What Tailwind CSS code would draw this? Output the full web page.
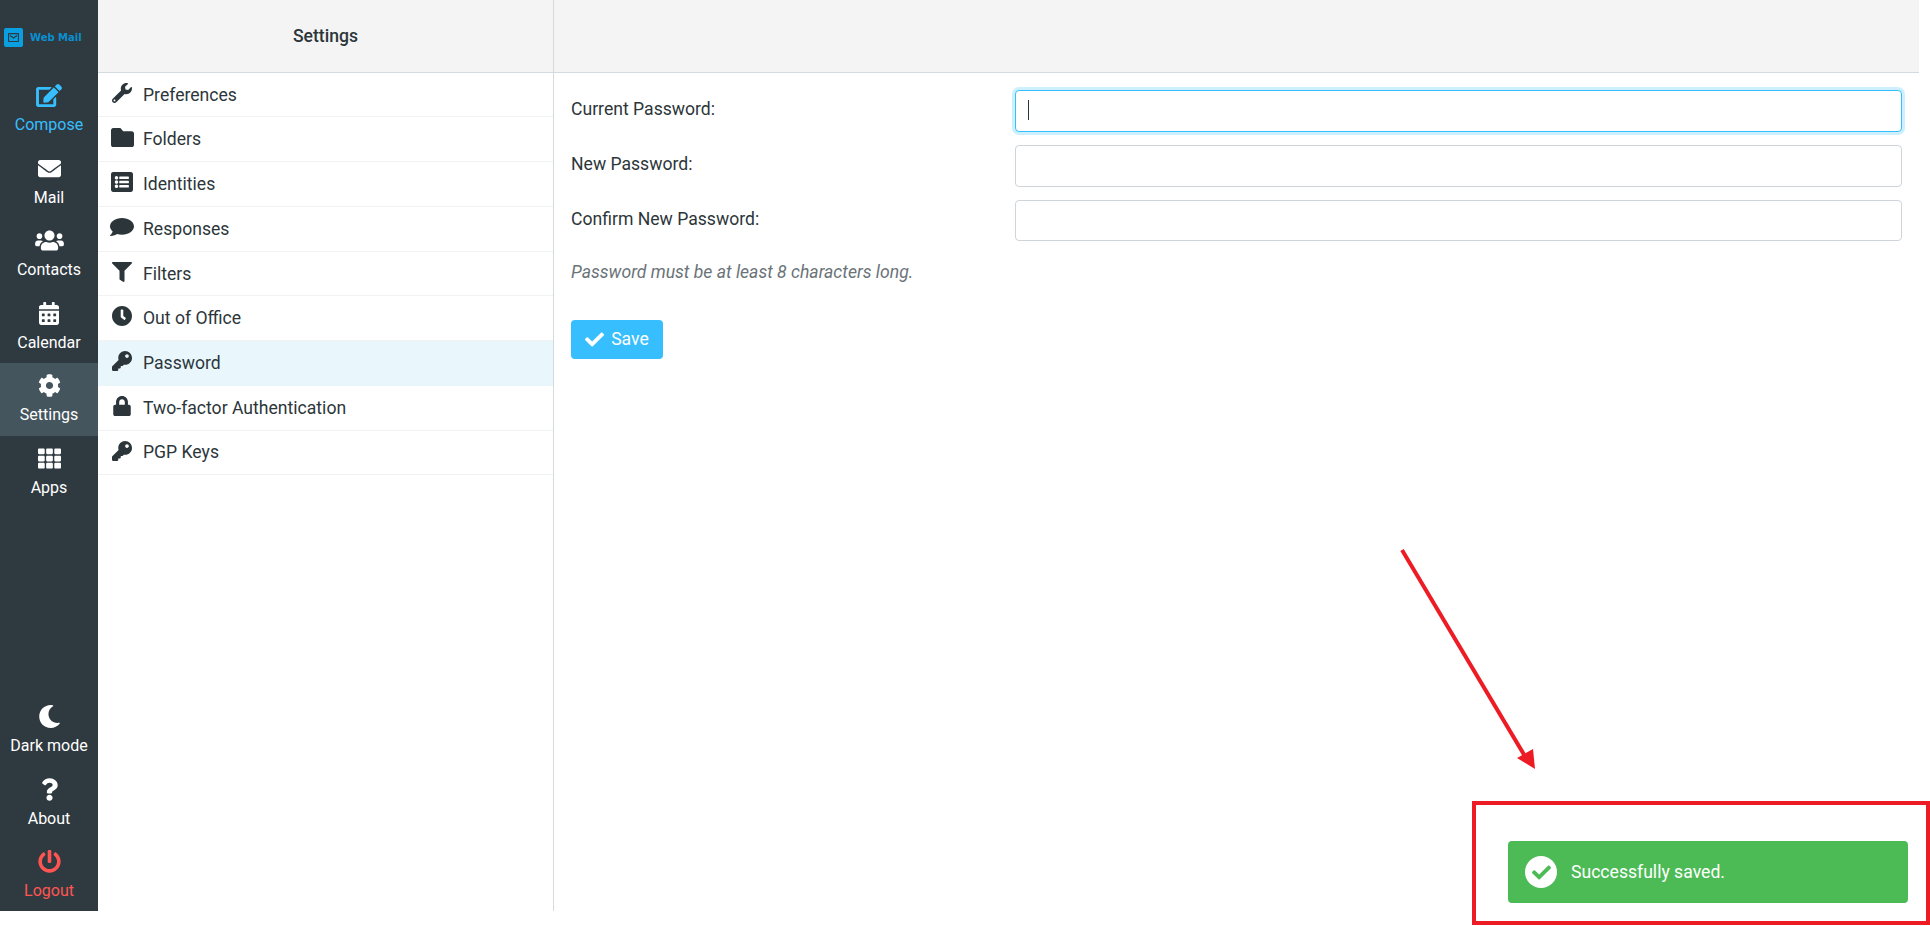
<!DOCTYPE html>
<html lang="en">
<head>
    <meta charset="UTF-8">
    <title>Web Mail - Settings</title>
    <script src="https://cdn.jsdelivr.net/npm/@tailwindcss/browser@4"></script>
</head>
<body class="bg-white h-[926px] overflow-hidden relative font-['Roboto',sans-serif] text-[#2c363a]">
    <!-- icon set -->
    <svg class="hidden">
        <symbol id="i-edit" viewBox="0 0 576 512"><path d="M402.6 83.2l90.2 90.2c3.8 3.8 3.8 10 0 13.8L274.4 405.6l-92.8 10.3c-12.4 1.4-22.9-9.1-21.5-21.5l10.3-92.8L388.8 83.2c3.8-3.8 10-3.8 13.8 0zm162-22.9l-48.8-48.8c-15.2-15.2-39.9-15.2-55.2 0l-35.4 35.4c-3.8 3.8-3.8 10 0 13.8l90.2 90.2c3.8 3.8 10 3.8 13.8 0l35.4-35.4c15.2-15.3 15.2-40 0-55.2zM384 346.2V448H64V128h229.8c3.2 0 6.2-1.3 8.5-3.5l40-40c7.6-7.6 2.2-20.5-8.5-20.5H48C21.5 64 0 85.5 0 112v352c0 26.5 21.5 48 48 48h352c26.5 0 48-21.5 48-48V306.2c0-10.7-12.9-16-20.5-8.5l-40 40c-2.2 2.3-3.5 5.3-3.5 8.5z"/></symbol>
        <symbol id="i-mail" viewBox="0 0 512 512"><path d="M502.3 190.8c3.9-3.1 9.7-.2 9.7 4.7V400c0 26.5-21.5 48-48 48H48c-26.5 0-48-21.5-48-48V195.6c0-5 5.7-7.8 9.7-4.7 22.4 17.4 52.1 39.5 154.1 113.6 21.1 15.4 56.7 47.8 92.2 47.6 35.7.3 72-32.8 92.3-47.6 102-74.1 131.6-96.3 154-113.7zM256 320c23.2.4 56.6-29.2 73.4-41.4 132.7-96.3 142.8-104.7 173.4-128.7 5.8-4.5 9.2-11.5 9.2-18.9v-19c0-26.5-21.5-48-48-48H48C21.5 64 0 85.5 0 112v19c0 7.4 3.4 14.3 9.2 18.9 30.6 23.9 40.7 32.4 173.4 128.7 16.8 12.2 50.2 41.8 73.4 41.4z"/></symbol>
        <symbol id="i-users" viewBox="0 0 640 512"><path d="M96 224c35.3 0 64-28.7 64-64s-28.7-64-64-64-64 28.7-64 64 28.7 64 64 64zm448 0c35.3 0 64-28.7 64-64s-28.7-64-64-64-64 28.7-64 64 28.7 64 64 64zm32 32h-64c-17.6 0-33.5 7.1-45.1 18.6 40.3 22.1 68.9 62 75.1 109.4h66c17.7 0 32-14.3 32-32v-32c0-35.3-28.7-64-64-64zm-256 0c61.9 0 112-50.1 112-112S381.9 32 320 32 208 82.1 208 144s50.1 112 112 112zm76.8 32h-8.3c-20.8 10-43.9 16-68.5 16s-47.6-6-68.5-16h-8.3C179.6 288 128 339.6 128 403.2V432c0 26.5 21.5 48 48 48h288c26.5 0 48-21.5 48-48v-28.8c0-63.6-51.6-115.2-115.2-115.2zm-223.7-13.4C161.5 263.1 145.6 256 128 256H64c-35.3 0-64 28.7-64 64v32c0 17.7 14.3 32 32 32h65.9c6.3-47.4 34.9-87.3 75.2-109.4z"/></symbol>
        <symbol id="i-calendar" viewBox="0 0 448 512"><path d="M0 464c0 26.5 21.5 48 48 48h352c26.5 0 48-21.5 48-48V192H0v272zm320-196c0-6.6 5.4-12 12-12h40c6.6 0 12 5.4 12 12v40c0 6.6-5.4 12-12 12h-40c-6.6 0-12-5.4-12-12v-40zm0 128c0-6.6 5.4-12 12-12h40c6.6 0 12 5.4 12 12v40c0 6.6-5.4 12-12 12h-40c-6.6 0-12-5.4-12-12v-40zM192 268c0-6.6 5.4-12 12-12h40c6.6 0 12 5.4 12 12v40c0 6.6-5.4 12-12 12h-40c-6.6 0-12-5.4-12-12v-40zm0 128c0-6.6 5.4-12 12-12h40c6.6 0 12 5.4 12 12v40c0 6.6-5.4 12-12 12h-40c-6.6 0-12-5.4-12-12v-40zM64 268c0-6.6 5.4-12 12-12h40c6.6 0 12 5.4 12 12v40c0 6.6-5.4 12-12 12H76c-6.6 0-12-5.4-12-12v-40zm0 128c0-6.6 5.4-12 12-12h40c6.6 0 12 5.4 12 12v40c0 6.6-5.4 12-12 12H76c-6.6 0-12-5.4-12-12v-40zM400 64h-48V16c0-8.8-7.2-16-16-16h-32c-8.8 0-16 7.2-16 16v48H160V16c0-8.8-7.2-16-16-16h-32c-8.8 0-16 7.2-16 16v48H48C21.5 64 0 85.5 0 112v48h448v-48c0-26.5-21.5-48-48-48z"/></symbol>
        <symbol id="i-cog" viewBox="0 0 512 512"><path d="M487.4 315.7l-42.6-24.6c4.3-23.2 4.3-47 0-70.2l42.6-24.6c4.9-2.8 7.1-8.6 5.5-14-11.1-35.6-30-67.8-54.7-94.6-3.8-4.1-10-5.1-14.8-2.3L380.8 110c-17.9-15.4-38.5-27.3-60.8-35.1V25.8c0-5.6-3.9-10.5-9.4-11.7-36.7-8.2-74.3-7.8-109.2 0-5.5 1.2-9.4 6.1-9.4 11.7V75c-22.2 7.9-42.8 19.8-60.8 35.1L88.7 85.5c-4.9-2.8-11-1.9-14.8 2.3-24.7 26.7-43.6 58.9-54.7 94.6-1.7 5.4.6 11.2 5.5 14L67.3 221c-4.3 23.2-4.3 47 0 70.2l-42.6 24.6c-4.9 2.8-7.1 8.6-5.5 14 11.1 35.6 30 67.8 54.7 94.6 3.8 4.1 10 5.1 14.8 2.3l42.6-24.6c17.9 15.4 38.5 27.3 60.8 35.1v49.2c0 5.6 3.9 10.5 9.4 11.7 36.7 8.2 74.3 7.8 109.2 0 5.5-1.2 9.4-6.1 9.4-11.7v-49.2c22.2-7.9 42.8-19.8 60.8-35.1l42.6 24.6c4.9 2.8 11 1.9 14.8-2.3 24.7-26.7 43.6-58.9 54.7-94.6 1.5-5.5-.7-11.3-5.6-14.1zM256 336c-44.1 0-80-35.9-80-80s35.9-80 80-80 80 35.9 80 80-35.9 80-80 80z"/></symbol>
        <symbol id="i-apps" viewBox="0 0 512 512"><path d="M149.333 56v80c0 13.255-10.745 24-24 24H24c-13.255 0-24-10.745-24-24V56c0-13.255 10.745-24 24-24h101.333c13.255 0 24 10.745 24 24zm181.334 240v-80c0-13.255-10.745-24-24-24H205.333c-13.255 0-24 10.745-24 24v80c0 13.255 10.745 24 24 24h101.333c13.256 0 24.001-10.745 24.001-24zm32-240v80c0 13.255 10.745 24 24 24H488c13.255 0 24-10.745 24-24V56c0-13.255-10.745-24-24-24H386.667c-13.255 0-24 10.745-24 24zm-32 80V56c0-13.255-10.745-24-24-24H205.333c-13.255 0-24 10.745-24 24v80c0 13.255 10.745 24 24 24h101.333c13.256 0 24.001-10.745 24.001-24zm-205.334 56H24c-13.255 0-24 10.745-24 24v80c0 13.255 10.745 24 24 24h101.333c13.255 0 24-10.745 24-24v-80c0-13.255-10.745-24-24-24zM0 376v80c0 13.255 10.745 24 24 24h101.333c13.255 0 24-10.745 24-24v-80c0-13.255-10.745-24-24-24H24c-13.255 0-24 10.745-24 24zm386.667-56H488c13.255 0 24-10.745 24-24v-80c0-13.255-10.745-24-24-24H386.667c-13.255 0-24 10.745-24 24v80c0 13.255 10.745 24 24 24zm0 160H488c13.255 0 24-10.745 24-24v-80c0-13.255-10.745-24-24-24H386.667c-13.255 0-24 10.745-24 24v80c0 13.255 10.745 24 24 24zM181.333 376v80c0 13.255 10.745 24 24 24h101.333c13.255 0 24-10.745 24-24v-80c0-13.255-10.745-24-24-24H205.333c-13.255 0-24 10.745-24 24z"/></symbol>
        <symbol id="i-moon" viewBox="0 0 512 512"><path d="M283.211 512c78.962 0 151.079-35.925 198.857-94.792 7.068-8.708-.639-21.43-11.562-19.35-124.203 23.654-238.262-71.576-238.262-196.954 0-72.222 38.662-138.635 101.498-174.394 9.686-5.512 7.25-20.197-3.756-22.23A258.156 258.156 0 0 0 283.211 0c-141.309 0-256 114.511-256 256 0 141.309 114.511 256 256 256z"/></symbol>
        <symbol id="i-question" viewBox="0 0 384 512"><path d="M202.021 0C122.202 0 70.503 32.703 29.914 91.026c-7.363 10.58-5.093 25.086 5.178 32.874l43.138 32.709c10.373 7.865 25.132 6.026 33.253-4.148 25.049-31.381 43.63-49.449 82.757-49.449 30.764 0 68.816 19.799 68.816 49.631 0 22.552-18.617 34.134-48.993 51.164-35.423 19.86-82.299 44.576-82.299 106.405V320c0 13.255 10.745 24 24 24h72.471c13.255 0 24-10.745 24-24v-5.773c0-42.86 125.268-44.645 125.268-160.627C377.504 66.256 286.902 0 202.021 0zM192 373.459c-38.196 0-69.271 31.075-69.271 69.271 0 38.195 31.075 69.27 69.271 69.27s69.271-31.075 69.271-69.271-31.075-69.27-69.271-69.27z"/></symbol>
        <symbol id="i-power" viewBox="0 0 512 512"><path d="M400 54.1c63 45 104 118.6 104 201.9 0 136.8-110.8 247.7-247.5 248C120 504.3 8.2 393 8 256.4 7.9 173.1 48.9 99.3 111.8 54.2c11.7-8.3 28-4.8 35 7.7L162.6 90c5.9 10.5 3.1 23.8-6.6 31-41.5 30.8-68 79.6-68 134.9-.1 92.3 74.5 168.1 168 168.1 91.6 0 168.6-74.2 168-169.1-.3-51.8-24.7-101.8-68.1-134-9.7-7.2-12.4-20.5-6.5-30.9l15.8-28.1c7-12.4 23.2-16.1 34.8-7.8zM296 264V24c0-13.3-10.7-24-24-24h-32c-13.3 0-24 10.7-24 24v240c0 13.3 10.7 24 24 24h32c13.3 0 24-10.7 24-24z"/></symbol>
        <symbol id="i-wrench" viewBox="0 0 512 512"><path d="M507.73 109.1c-2.24-9.03-13.54-12.09-20.12-5.51l-74.36 74.36-67.88-11.31-11.31-67.88 74.36-74.36c6.62-6.62 3.43-17.9-5.66-20.16-47.38-11.74-99.55.91-136.58 37.93-39.64 39.64-50.55 97.1-34.05 147.2L18.74 402.76c-24.99 24.99-24.99 65.51 0 90.5 24.99 24.99 65.51 24.99 90.5 0l213.21-213.21c50.12 16.71 107.47 5.68 147.37-34.22 37.07-37.07 49.7-89.32 37.91-136.73zM64 472c-13.25 0-24-10.75-24-24 0-13.26 10.75-24 24-24s24 10.74 24 24c0 13.25-10.75 24-24 24z"/></symbol>
        <symbol id="i-folder" viewBox="0 64 512 384" preserveAspectRatio="none"><path d="M464 128H272l-64-64H48C21.49 64 0 85.49 0 112v288c0 26.51 21.49 48 48 48h416c26.51 0 48-21.49 48-48V176c0-26.51-21.49-48-48-48z"/></symbol>
        <symbol id="i-list" viewBox="0 32 512 448" preserveAspectRatio="none"><path d="M464 480H48c-26.51 0-48-21.49-48-48V80c0-26.51 21.49-48 48-48h416c26.51 0 48 21.49 48 48v352c0 26.51-21.49 48-48 48zM128 120c-22.091 0-40 17.909-40 40s17.909 40 40 40 40-17.909 40-40-17.909-40-40-40zm0 96c-22.091 0-40 17.909-40 40s17.909 40 40 40 40-17.909 40-40-17.909-40-40-40zm0 96c-22.091 0-40 17.909-40 40s17.909 40 40 40 40-17.909 40-40-17.909-40-40-40zm288-136v-32c0-6.627-5.373-12-12-12H204c-6.627 0-12 5.373-12 12v32c0 6.627 5.373 12 12 12h200c6.627 0 12-5.373 12-12zm0 96v-32c0-6.627-5.373-12-12-12H204c-6.627 0-12 5.373-12 12v32c0 6.627 5.373 12 12 12h200c6.627 0 12-5.373 12-12zm0 96v-32c0-6.627-5.373-12-12-12H204c-6.627 0-12 5.373-12 12v32c0 6.627 5.373 12 12 12h200c6.627 0 12-5.373 12-12z"/></symbol>
        <symbol id="i-comment" viewBox="0 32 512 448" preserveAspectRatio="none"><path d="M256 32C114.6 32 0 125.1 0 240c0 49.6 21.4 95 57 130.7C44.5 421.1 2.7 466 2.2 466.5c-2.2 2.3-2.8 5.7-1.5 8.7S4.8 480 8 480c66.3 0 116-31.8 140.6-51.4 32.7 12.3 69 19.4 107.4 19.4 141.4 0 256-93.1 256-208S397.4 32 256 32z"/></symbol>
        <symbol id="i-filter" viewBox="0 0 512 512"><path d="M487.976 0H24.028C2.71 0-8.047 25.866 7.058 40.971L192 225.941V432c0 7.831 3.821 15.17 10.237 19.662l80 55.98C298.02 518.69 320 507.493 320 487.98V225.941l184.947-184.97C520.021 25.896 509.338 0 487.976 0z"/></symbol>
        <symbol id="i-clock" viewBox="8 8 496 496"><path d="M256,8C119,8,8,119,8,256S119,504,256,504,504,393,504,256,393,8,256,8Zm92.49,313h0l-20,25a16,16,0,0,1-22.49,2.5h0l-67-49.72a40,40,0,0,1-15-31.23V112a16,16,0,0,1,16-16h32a16,16,0,0,1,16,16V256l58,42.5A16,16,0,0,1,348.49,321Z"/></symbol>
        <symbol id="i-key" viewBox="0 0 512 512"><path d="M512 176.001C512 273.203 433.202 352 336 352c-11.22 0-22.19-1.062-32.827-3.069l-24.012 27.014A23.999 23.999 0 0 1 261.223 384H224v40c0 13.255-10.745 24-24 24h-40v40c0 13.255-10.745 24-24 24H24c-13.255 0-24-10.745-24-24v-78.059c0-6.365 2.529-12.47 7.029-16.971l161.802-161.802C163.108 213.814 160 195.271 160 176 160 78.798 238.797.001 335.999 0 433.488-.001 512 78.511 512 176.001zM336 128c0 26.51 21.49 48 48 48s48-21.49 48-48-21.49-48-48-48-48 21.49-48 48z"/></symbol>
        <symbol id="i-lock" viewBox="0 0 448 512"><path d="M400 224h-24v-72C376 68.2 307.8 0 224 0S72 68.2 72 152v72H48c-26.5 0-48 21.5-48 48v192c0 26.5 21.5 48 48 48h352c26.5 0 48-21.5 48-48V272c0-26.5-21.5-48-48-48zm-104 0H152v-72c0-39.7 32.3-72 72-72s72 32.3 72 72v72z"/></symbol>
        <symbol id="i-check" viewBox="0 0 512 512"><path d="M173.898 439.404l-166.4-166.4c-9.997-9.997-9.997-26.206 0-36.204l36.203-36.204c9.997-9.998 26.207-9.998 36.204 0L192 312.69 432.095 72.596c9.997-9.997 26.207-9.997 36.204 0l36.203 36.204c9.997 9.997 9.997 26.206 0 36.204l-294.4 294.401c-9.998 9.997-26.207 9.997-36.204-.001z"/></symbol>
    </svg>

    <div class="flex w-[1919px] h-[911px]">
        <!-- Main menu -->
        <nav class="w-[98px] shrink-0 bg-[#2f3a40] flex flex-col text-white text-[16px] leading-5">
            <div class="h-[73px] flex items-center pl-1 pt-[2px]">
                <div class="w-[19px] h-[19px] rounded-[2px] bg-[#0a9fe0] flex items-center justify-center">
                    <svg class="w-[11px] h-[9px]" viewBox="0 0 22 18" fill="none" stroke="#2f3a40" stroke-width="2.5"><rect x="1" y="1" width="20" height="16" rx="2"/><path d="M4 5l7 5 7-5"/></svg>
                </div>
                <span class="ml-[7px] text-[#0a8fd0] font-['DejaVu_Sans',sans-serif] font-bold text-[10px]">Web Mail</span>
            </div>
            <a class="h-[72.5px] flex flex-col items-center pt-[11px] text-[#37beff]">
                <svg class="w-[26px] h-[23px] fill-current"><use href="#i-edit"/></svg>
                <span class="mt-[8px]">Compose</span>
            </a>
            <a class="h-[72.5px] flex flex-col items-center pt-[11px]">
                <svg class="w-[23px] h-[23px] fill-current"><use href="#i-mail"/></svg>
                <span class="mt-[8px]">Mail</span>
            </a>
            <a class="h-[72.5px] flex flex-col items-center pt-[11px]">
                <svg class="w-[29px] h-[23px] fill-current"><use href="#i-users"/></svg>
                <span class="mt-[8px]">Contacts</span>
            </a>
            <a class="h-[72.5px] flex flex-col items-center pt-[11px]">
                <svg class="w-[20px] h-[23px] fill-current"><use href="#i-calendar"/></svg>
                <span class="mt-[8px]">Calendar</span>
            </a>
            <a class="h-[72.5px] flex flex-col items-center pt-[11px] bg-[#45555d]">
                <svg class="w-[23px] h-[23px] fill-current"><use href="#i-cog"/></svg>
                <span class="mt-[8px]">Settings</span>
            </a>
            <a class="h-[72.5px] flex flex-col items-center pt-[11px]">
                <svg class="w-[23px] h-[23px] fill-current"><use href="#i-apps"/></svg>
                <span class="mt-[8px]">Apps</span>
            </a>
            <a class="mt-auto h-[73px] flex flex-col items-center pt-[13px]">
                <svg class="w-[23px] h-[23px] fill-current"><use href="#i-moon"/></svg>
                <span class="mt-[8px]">Dark mode</span>
            </a>
            <a class="h-[73px] flex flex-col items-center pt-[13px]">
                <svg class="w-[17px] h-[23px] fill-current"><use href="#i-question"/></svg>
                <span class="mt-[8px]">About</span>
            </a>
            <a class="h-[73px] flex flex-col items-center pt-[12px] text-[#ff5552]">
                <svg class="w-[23px] h-[23px] fill-current"><use href="#i-power"/></svg>
                <span class="mt-[8px]">Logout</span>
            </a>
        </nav>

        <!-- Settings sections -->
        <aside class="w-[456px] shrink-0 border-r border-[#d4dbde] flex flex-col text-[17.6px]">
            <div class="h-[73px] shrink-0 flex items-center justify-center bg-[#f4f4f4] border-b border-[#d4dbde] font-medium">Settings</div>
            <ul>
                <li class="h-[44px] flex items-center pl-[11px] pt-[1px] border-b border-[#f0f2f3]">
                    <span class="w-[26px] flex justify-center mb-[4px]"><svg class="w-[20px] h-[20px] fill-current"><use href="#i-wrench"/></svg></span>
                    <span class="ml-[8px]">Preferences</span>
                </li>
                <li class="h-[45px] flex items-center pl-[11px] border-b border-[#f0f2f3]">
                    <span class="w-[26px] flex justify-center mb-[4px]"><svg class="w-[23px] h-[19px] fill-current"><use href="#i-folder"/></svg></span>
                    <span class="ml-[8px]">Folders</span>
                </li>
                <li class="h-[45px] flex items-center pl-[11px] border-b border-[#f0f2f3]">
                    <span class="w-[26px] flex justify-center mb-[4px]"><svg class="w-[22px] h-[20px] fill-current"><use href="#i-list"/></svg></span>
                    <span class="ml-[8px]">Identities</span>
                </li>
                <li class="h-[45px] flex items-center pl-[11px] border-b border-[#f0f2f3]">
                    <span class="w-[26px] flex justify-center mb-[4px]"><svg class="w-[24px] h-[18px] fill-current"><use href="#i-comment"/></svg></span>
                    <span class="ml-[8px]">Responses</span>
                </li>
                <li class="h-[44px] flex items-center pl-[11px] pt-[1px] border-b border-[#f0f2f3]">
                    <span class="w-[26px] flex justify-center mb-[4px]"><svg class="w-[20px] h-[20px] fill-current"><use href="#i-filter"/></svg></span>
                    <span class="ml-[8px]">Filters</span>
                </li>
                <li class="h-[45px] flex items-center pl-[11px] border-b border-[#f0f2f3]">
                    <span class="w-[26px] flex justify-center mb-[4px]"><svg class="w-[20px] h-[20px] fill-current"><use href="#i-clock"/></svg></span>
                    <span class="ml-[8px]">Out of Office</span>
                </li>
                <li class="h-[45px] flex items-center pl-[11px] pb-[1px] bg-[#e9f7fd]">
                    <span class="w-[26px] flex justify-center mb-[4px]"><svg class="w-[20px] h-[20px] fill-current"><use href="#i-key"/></svg></span>
                    <span class="ml-[8px]">Password</span>
                </li>
                <li class="h-[45px] flex items-center pl-[11px] border-b border-[#f0f2f3]">
                    <span class="w-[26px] flex justify-center mb-[4px]"><svg class="w-[18px] h-[20px] fill-current"><use href="#i-lock"/></svg></span>
                    <span class="ml-[8px]">Two-factor Authentication</span>
                </li>
                <li class="h-[44px] flex items-center pl-[11px] border-b border-[#f0f2f3]">
                    <span class="w-[26px] flex justify-center mb-[4px]"><svg class="w-[20px] h-[20px] fill-current"><use href="#i-key"/></svg></span>
                    <span class="ml-[8px]">PGP Keys</span>
                </li>
            </ul>
        </aside>

        <!-- Password form -->
        <main class="flex-1 flex flex-col text-[17.6px]">
            <div class="h-[73px] shrink-0 bg-[#f4f4f4] border-b border-[#d4dbde]"></div>
            <form class="pl-[17px] pr-[17px] pt-[17px]">
                <div class="flex mb-[13px]">
                    <label class="w-[444px] shrink-0 pt-[6px]">Current Password:</label>
                    <div class="relative flex-1">
                        <input type="password" class="block w-full h-[42px] rounded-[4px] border border-[#37beff] ring-[3px] ring-[#cdf0ff] outline-none bg-white">
                        <span class="absolute left-[13px] top-[10px] w-px h-[20px] bg-[#2c363a]"></span>
                    </div>
                </div>
                <div class="flex mb-[13px]">
                    <label class="w-[444px] shrink-0 pt-[6px]">New Password:</label>
                    <input type="password" class="flex-1 h-[42px] rounded-[4px] border border-[#ced4da] outline-none bg-white">
                </div>
                <div class="flex">
                    <label class="w-[444px] shrink-0 pt-[6px]">Confirm New Password:</label>
                    <input type="password" class="flex-1 h-[41px] rounded-[4px] border border-[#ced4da] outline-none bg-white">
                </div>
                <p class="mt-[18px] italic text-[#6a7378]">Password must be at least 8 characters long.</p>
                <button type="button" class="mt-[35px] w-[92px] h-[39px] pb-[1px] rounded-[4px] bg-[#37beff] text-white flex items-center justify-center gap-[7px]">
                    <svg class="w-[19px] h-[19px] fill-current"><use href="#i-check"/></svg>
                    <span>Save</span>
                </button>
            </form>
        </main>
    </div>

    <!-- Saved message -->
    <div class="absolute left-[1508px] top-[841px] w-[400px] h-[62px] rounded-[4px] bg-[#4cbb56] text-white text-[17.6px] flex items-center pl-[17px]">
        <span class="w-[32px] h-[32px] rounded-full bg-white flex items-center justify-center text-[#4cbb56]">
            <svg class="w-[19px] h-[19px] fill-current"><use href="#i-check"/></svg>
        </span>
        <span class="ml-[14px]">Successfully saved.</span>
    </div>

    <!-- Annotation drawn over the screenshot -->
    <div class="absolute left-[1472px] top-[801px] w-[458px] h-[124px] border-4 border-[#ed1c24]"></div>
    <svg class="absolute left-0 top-0 w-[1930px] h-[926px] pointer-events-none" viewBox="0 0 1930 926">
        <line x1="1402" y1="550" x2="1526" y2="758" stroke="#ed1c24" stroke-width="4"/>
        <polygon points="1517,758 1533,749 1535,769" fill="#ed1c24"/>
    </svg>
</body>
</html>
